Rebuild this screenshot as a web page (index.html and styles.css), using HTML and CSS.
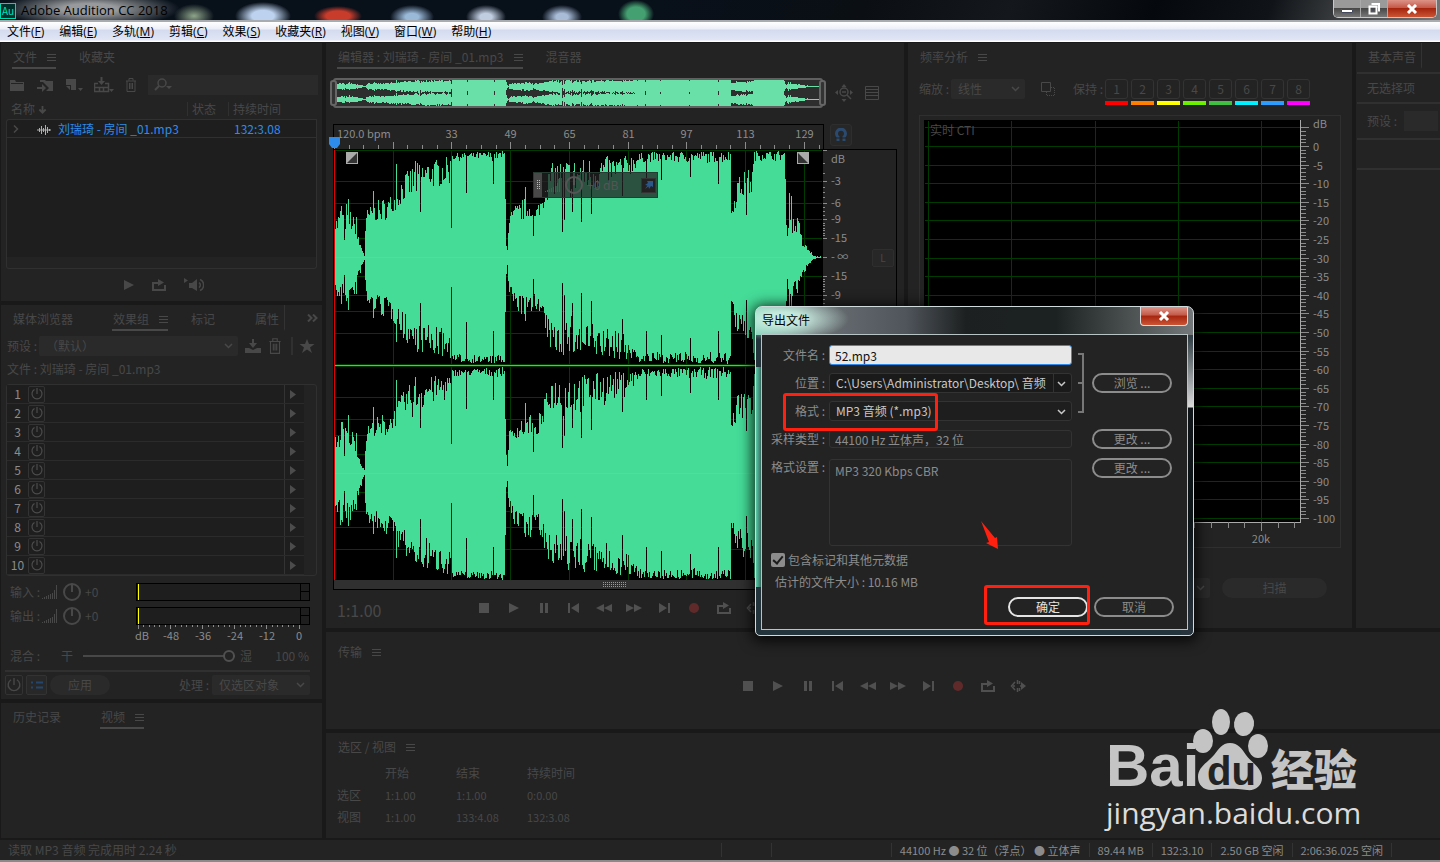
FILE: index.html
```html
<!DOCTYPE html>
<html lang="zh-CN">
<head>
    <meta charset="UTF-8">
    <meta name="viewport" content="width=device-width, initial-scale=1.0">
    <title>Adobe Audition CC 2018</title>
    <link rel="stylesheet" href="styles.css">
</head>
<body>

    <!-- shared icons -->
    <svg class="sprite" width="0" height="0" aria-hidden="true">
        <symbol id="i-menu" viewBox="0 0 9 9"><path d="M0 1.5h9M0 4.5h9M0 7.5h9" stroke="currentColor" fill="none"/></symbol>
        <symbol id="i-folder" viewBox="0 0 16 16"><path d="M1 3h5l1 2h8v9H1z M2 6v1h12V6z" fill="currentColor" fill-rule="evenodd"/></symbol>
        <symbol id="i-import" viewBox="0 0 18 16"><path d="M4 3h5l1 1h7v10h-7l3-3-6-6H4z" fill="currentColor"/><path d="M3 6l4 3M1 10h5V7l4 4-4 4v-3H1z" fill="currentColor"/></symbol>
        <symbol id="i-new" viewBox="0 0 18 16"><path d="M1 2h10v11L6 13V8H1z M1 9h4v4z M13 11h5l-2.500 3z" fill="currentColor"/></symbol>
        <symbol id="i-tray" viewBox="0 0 20 16"><path d="M4 6.500H.5v8h14v-8H11M.5 10.500h14M5.500 10.500v4M9.500 10.500v4" fill="none" stroke="currentColor" stroke-width="1.500"/><path d="M6.500 0h2v4H11L7.500 8 4 4h2.500zM15 12h5l-2.500 3z" fill="currentColor"/></symbol>
        <symbol id="i-trash" viewBox="0 0 12 16"><path d="M1 4h10M2 4v10.500h8V4M4 3.500V1.500h4v2M4.500 6v6M6 6v6M7.500 6v6" fill="none" stroke="currentColor"/></symbol>
        <symbol id="i-search" viewBox="0 0 18 14"><circle cx="8" cy="5" r="4" fill="none" stroke="currentColor" stroke-width="1.500"/><path d="M5 8l-4 4" stroke="currentColor" stroke-width="2"/><path d="M12 8h6l-3 3z" fill="currentColor"/></symbol>
        <symbol id="i-down" viewBox="0 0 10 10"><path d="M5 1v7M1.500 5L5 8.500 8.500 5" stroke="currentColor" stroke-width="2" fill="none"/></symbol>
        <symbol id="i-chev" viewBox="0 0 8 6"><path d="M.5 1L4 4.500 7.500 1" stroke="currentColor" stroke-width="1.500" fill="none"/></symbol>
        <symbol id="i-right" viewBox="0 0 6 8"><path d="M1 .5L4.500 4 1 7.500" stroke="currentColor" stroke-width="1.500" fill="none"/></symbol>
        <symbol id="i-wave" viewBox="0 0 14 12"><path d="M0 6h14M2.500 4v4M4.500 2v8M6.500 4v4M8.500 1v10M10.500 3v6M12.500 5v2" stroke="currentColor"/></symbol>
        <symbol id="i-play" viewBox="0 0 10 10"><path d="M0 0l10 5-10 5z" fill="currentColor"/></symbol>
        <symbol id="i-stop" viewBox="0 0 10 10"><path d="M0 0h10v10H0z" fill="currentColor"/></symbol>
        <symbol id="i-pause" viewBox="0 0 10 10"><path d="M1 0h3v10H1zM6 0h3v10H6z" fill="currentColor"/></symbol>
        <symbol id="i-prev" viewBox="0 0 12 10"><path d="M0 0h2v10H0zM11 0v10L3 5z" fill="currentColor"/></symbol>
        <symbol id="i-next" viewBox="0 0 12 10"><path d="M10 0h2v10h-2zM1 0v10l8-5z" fill="currentColor"/></symbol>
        <symbol id="i-rew" viewBox="0 0 16 10"><path d="M8 1v8L0 5zM16 1v8L8 5z" fill="currentColor"/></symbol>
        <symbol id="i-ff" viewBox="0 0 16 10"><path d="M0 1v8l8-4zM8 1v8l8-4z" fill="currentColor"/></symbol>
        <symbol id="i-rec" viewBox="0 0 10 10"><circle cx="5" cy="5" r="5" fill="currentColor"/></symbol>
        <symbol id="i-loop" viewBox="0 0 14 12"><path d="M4 4H1v7h12V6" fill="none" stroke="currentColor" stroke-width="2"/><path d="M4 3h2V0l6 3.500L6 7V5H4z" fill="currentColor"/></symbol>
        <symbol id="i-skip" viewBox="0 0 16 12"><path d="M3 6h2M5 2L1.500 6 5 10M7.500 0v4M7.500 8v4M9.500 1v3M9.500 8v3M10 6h3" fill="none" stroke="currentColor" stroke-width="1.500"/><path d="M11 2l5 4-5 4z" fill="currentColor"/></symbol>
        <symbol id="i-speaker" viewBox="0 0 20 14"><path d="M0 0l4 2.500L0 5zM5 5h3l5-4v12L8 10H5z" fill="currentColor"/><path d="M15 4.500a3 3 0 010 5M16 1.500a6 6 0 010 11" fill="none" stroke="currentColor" stroke-width="1.500"/></symbol>
        <symbol id="i-save" viewBox="0 0 16 14"><path d="M0 9h4l4 2 4-2h4v5H0zM7 0h2v4h3L8 9 4 4h3z" fill="currentColor"/></symbol>
        <symbol id="i-star" viewBox="0 0 16 16"><path d="M8 1l2 5h5.500l-4.500 3.500 2 5.500-5-3.500L3 15l2-5.500L.5 6H6z" fill="currentColor"/></symbol>
        <symbol id="i-more" viewBox="0 0 11 8"><path d="M1 .5L4.500 4 1 7.500M6 .5L9.500 4 6 7.500" fill="none" stroke="currentColor" stroke-width="2"/></symbol>
        <symbol id="i-power" viewBox="0 0 12 12"><path d="M6 0v6M3.500 1.500a5 5 0 105 0" fill="none" stroke="currentColor" stroke-width="1.200"/></symbol>
        <symbol id="i-list" viewBox="0 0 12 8"><path d="M0 1.500h2M5 1.500h7M0 6.500h2M5 6.500h7" stroke="currentColor" stroke-width="2"/></symbol>
        <symbol id="i-bars" viewBox="0 0 16 14"><path d="M.5 14v-1M2.500 14v-2M4.500 14v-3M6.500 14v-4M8.500 14v-5M10.500 14v-6M12.500 14V5M14.500 14V0" stroke="currentColor"/></symbol>
        <symbol id="i-knob" viewBox="0 0 20 20"><circle cx="10" cy="10" r="8" fill="none" stroke="currentColor" stroke-width="2"/><path d="M10 2v8" stroke="currentColor" stroke-width="2"/></symbol>
        <symbol id="i-zoomall" viewBox="0 0 18 18"><circle cx="9" cy="8" r="4" fill="none" stroke="currentColor" stroke-width="1.500"/><path d="M7 8h4M12 11l4 4" stroke="currentColor" stroke-width="1.500"/><path d="M9 0l2.500 3h-5zM9 18l2.500-3h-5zM0 8.500L3 6v5zM18 8.500L15 6v5z" fill="currentColor"/></symbol>
        <symbol id="i-rows" viewBox="0 0 14 14"><path d="M.5.5h13v13H.5zM0 3.500h14M0 6.500h14M0 9.500h14" fill="none" stroke="currentColor"/></symbol>
        <symbol id="i-magnet" viewBox="0 0 14 14"><path d="M4 13V9a4.500 4.500 0 116 0v4" fill="none" stroke="currentColor" stroke-width="3"/><path d="M1 10h12" stroke="#232323"/></symbol>
        <symbol id="i-copy" viewBox="0 0 14 14"><path d="M.5.5h9v9h-9z" fill="none" stroke="currentColor"/><path d="M10 5.500h3.500v8h-8V10" fill="none" stroke="currentColor" stroke-dasharray="1 1"/></symbol>
        <symbol id="i-pin" viewBox="0 0 10 10"><path d="M3 1h6v6L7 6 5 9 4.500 6.500 1 9 3.500 5.500 1 5l3-2z" fill="currentColor"/></symbol>
    </svg>

    <header class="titlebar">
        <span class="app-icon">Au</span>
        <h1 class="app-title">Adobe Audition CC 2018</h1>
        <div class="win-buttons">
            <button aria-label="最小化"><svg width="12" height="8"><path d="M.5 4.500h11v3H.5z" fill="#fff" stroke="#444a5c"/></svg></button>
            <button aria-label="还原"><svg width="12" height="12"><path d="M3.500 1h7.500v7.500M1.500 3.500h7v7h-7z" fill="none" stroke="#fff" stroke-width="2"/><path d="M4 5.500h2v2H4z" fill="#444a5c"/></svg></button>
            <button class="win-close" aria-label="关闭"><svg width="12" height="10"><path d="M2 1l8 8M10 1L2 9" stroke="#fff" stroke-width="3"/></svg></button>
        </div>
    </header>

    <nav class="menubar">
        <button>文件(<u>F</u>)</button>
        <button>编辑(<u>E</u>)</button>
        <button>多轨(<u>M</u>)</button>
        <button>剪辑(<u>C</u>)</button>
        <button>效果(<u>S</u>)</button>
        <button>收藏夹(<u>R</u>)</button>
        <button>视图(<u>V</u>)</button>
        <button>窗口(<u>W</u>)</button>
        <button>帮助(<u>H</u>)</button>
    </nav>

    <main class="workspace">
        <div class="side">
            <section class="panel files">
                <div class="tabs">
                    <button class="tab active">文件<svg><use href="#i-menu"/></svg></button>
                    <button class="tab">收藏夹</button>
                </div>
                <div class="file-tools">
                    <button aria-label="打开文件"><svg width="16" height="16"><use href="#i-folder"/></svg></button>
                    <button aria-label="导入文件"><svg width="18" height="16"><use href="#i-import"/></svg></button>
                    <button aria-label="新建文件"><svg width="18" height="16"><use href="#i-new"/></svg></button>
                    <button aria-label="插入到多轨"><svg width="20" height="16"><use href="#i-tray"/></svg></button>
                    <button aria-label="删除"><svg width="12" height="16"><use href="#i-trash"/></svg></button>
                    <label class="search"><svg width="18" height="14"><use href="#i-search"/></svg><input type="text" aria-label="搜索"></label>
                </div>
                <table class="file-table">
                    <thead>
                        <tr>
                            <th class="c-name">名称 <svg width="9" height="9"><use href="#i-down"/></svg></th>
                            <th class="c-state">状态</th>
                            <th>持续时间</th>
                        </tr>
                    </thead>
                    <tbody>
                        <tr>
                            <td><svg class="expand" width="6" height="8"><use href="#i-right"/></svg><svg class="wave-ico" width="14" height="12"><use href="#i-wave"/></svg>刘瑞琦 - 房间 _01.mp3</td>
                            <td></td>
                            <td>132:3.08</td>
                        </tr>
                    </tbody>
                </table>
                <div class="file-space"></div>
                <div class="preview">
                    <button aria-label="播放"><svg width="10" height="10"><use href="#i-play"/></svg></button>
                    <button aria-label="循环"><svg width="14" height="12"><use href="#i-loop"/></svg></button>
                    <button aria-label="自动播放"><svg width="20" height="14"><use href="#i-speaker"/></svg></button>
                </div>
            </section>

            <section class="panel rack">
                <div class="tabs">
                    <button class="tab">媒体浏览器</button>
                    <button class="tab active">效果组<svg><use href="#i-menu"/></svg></button>
                    <button class="tab">标记</button>
                    <button class="tab last">属性</button>
                    <button class="more" aria-label="更多"><svg width="11" height="8"><use href="#i-more"/></svg></button>
                </div>
                <div class="preset-row">
                    <label for="preset">预设 :</label>
                    <span class="select"><select id="preset"><option>（默认）</option></select><svg><use href="#i-chev"/></svg></span>
                    <button aria-label="保存预设"><svg width="16" height="14"><use href="#i-save"/></svg></button>
                    <button aria-label="删除预设"><svg width="14" height="18"><use href="#i-trash"/></svg></button>
                    <i></i>
                    <button aria-label="收藏"><svg width="16" height="16"><use href="#i-star"/></svg></button>
                </div>
                <p class="rack-file">文件 : 刘瑞琦 - 房间 _01.mp3</p>
                <ol class="slots" id="slots"></ol>
                <div class="levels">
                    <div class="level"><span>输入 :</span><svg width="16" height="14"><use href="#i-bars"/></svg><svg width="20" height="20"><use href="#i-knob"/></svg><span>+0</span><div class="meter"></div></div>
                    <div class="level"><span>输出 :</span><svg width="16" height="14"><use href="#i-bars"/></svg><svg width="20" height="20"><use href="#i-knob"/></svg><span>+0</span><div class="meter"></div></div>
                </div>
                <svg class="meter-scale" id="meterScale"></svg>
                <div class="mix">
                    <label for="mix">混合 :</label><span>干</span>
                    <input type="range" id="mix" value="100">
                    <span>湿</span><output for="mix">100 %</output>
                </div>
                <div class="rack-foot">
                    <button class="sq" aria-label="电源"><svg width="14" height="14"><use href="#i-power"/></svg></button>
                    <button class="sq wide" aria-label="列表"><svg width="12" height="8"><use href="#i-list"/></svg></button>
                    <button class="pill">应用</button>
                    <label for="proc">处理 :</label>
                    <span class="select"><select id="proc"><option>仅选区对象</option></select><svg><use href="#i-chev"/></svg></span>
                </div>
            </section>

            <section class="panel history">
                <div class="tabs">
                    <button class="tab">历史记录</button>
                    <button class="tab active">视频<svg><use href="#i-menu"/></svg></button>
                </div>
            </section>
        </div>

        <div class="center">
            <div class="top-row">
                <section class="panel editor">
                    <div class="tabs">
                        <button class="tab active">编辑器 : 刘瑞琦 - 房间 _01.mp3<svg><use href="#i-menu"/></svg></button>
                        <button class="tab">混音器</button>
                    </div>
                    <div class="overview-row">
                        <div class="overview"><svg id="overview"></svg></div>
                        <button aria-label="缩放"><svg width="18" height="18"><use href="#i-zoomall"/></svg></button>
                        <button aria-label="显示"><svg width="14" height="14"><use href="#i-rows"/></svg></button>
                    </div>
                    <div class="ruler-row">
                        <div class="ruler"><svg id="ruler"></svg></div>
                        <button class="snap" aria-label="对齐"><svg width="14" height="14"><use href="#i-magnet"/></svg></button>
                    </div>
                    <div class="wave-box">
                        <div class="wave-main">
                            <svg id="wave"></svg>
                            <div class="scroll-strip"><i></i></div>
                            <div class="hud">
                                <i></i><svg width="16" height="14"><use href="#i-bars"/></svg><svg width="20" height="20"><use href="#i-knob"/></svg><span>+0 dB</span>
                                <button aria-label="固定"><svg width="10" height="10"><use href="#i-pin"/></svg></button>
                            </div>
                        </div>
                        <div class="db-scale"><svg id="dbScale"></svg><button class="chan">L</button></div>
                    </div>
                    <div class="time-row">
                        <span class="time">1:1.00</span>
                        <div class="transport" data-transport></div>
                    </div>
                </section>

                <section class="panel freq">
                    <div class="tabs"><button class="tab">频率分析<svg><use href="#i-menu"/></svg></button></div>
                    <div class="freq-tools">
                        <label for="zoom">缩放 :</label>
                        <span class="select"><select id="zoom"><option>线性</option></select><svg><use href="#i-chev"/></svg></span>
                        <button aria-label="复制"><svg width="14" height="14"><use href="#i-copy"/></svg></button>
                        <span>保持 :</span>
                        <div class="holds" id="holds"></div>
                    </div>
                    <div class="freq-frame"><svg id="freq"></svg></div>
                    <div class="freq-foot">
                        <span class="select"><select aria-label="FFT"><option></option></select><svg><use href="#i-chev"/></svg></span>
                        <button class="pill">扫描</button>
                    </div>
                </section>

                <section class="panel essential">
                    <div class="tabs"><button class="tab last">基本声音</button></div>
                    <p class="ess-line">无选择项</p>
                    <p class="ess-line preset"><span>预设 :</span><b></b></p>
                    <p class="ess-line short"></p>
                </section>
            </div>

            <section class="panel transport-panel">
                <div class="tabs"><button class="tab">传输<svg><use href="#i-menu"/></svg></button></div>
                <div class="transport" data-transport></div>
            </section>

            <section class="panel selection">
                <div class="tabs"><button class="tab">选区 / 视图<svg><use href="#i-menu"/></svg></button></div>
                <table>
                    <tr><th></th><th>开始</th><th>结束</th><th>持续时间</th></tr>
                    <tr><th>选区</th><td>1:1.00</td><td>1:1.00</td><td>0:0.00</td></tr>
                    <tr><th>视图</th><td>1:1.00</td><td>133:4.08</td><td>132:3.08</td></tr>
                </table>
            </section>
        </div>
    </main>

    <footer class="statusbar">
        <span class="msg">读取 MP3 音频 完成用时 2.24 秒</span>
        <span class="blank"></span>
        <span class="blank wide"></span>
        <span>44100 Hz ● 32 位（浮点） ● 立体声</span>
        <span>89.44 MB</span>
        <span>132:3.10</span>
        <span>2.50 GB 空闲</span>
        <span>2:06:36.025 空闲</span>
        <span class="end"></span>
    </footer>

    <div class="dialog" role="dialog" aria-labelledby="dlgTitle">
        <div class="dlg-head">
            <h2 id="dlgTitle">导出文件</h2>
            <button class="win-close" aria-label="关闭"><svg width="12" height="10"><path d="M2 1l8 8M10 1L2 9" stroke="#fff" stroke-width="3"/></svg></button>
        </div>
        <form class="dlg-body" onsubmit="return false">
            <div class="fields">
                <label for="fname">文件名 :</label>
                <input type="text" id="fname" value="52.mp3">
                <label for="loc">位置 :</label>
                <span class="select split"><select id="loc"><option>C:\Users\Administrator\Desktop\ 音频</option></select><svg><use href="#i-chev"/></svg></span>
                <button class="pill browse">浏览 ...</button>
                <label for="fmt">格式 :</label>
                <span class="select"><select id="fmt"><option>MP3 音频 (*.mp3)</option></select><svg><use href="#i-chev"/></svg></span>
                <label for="stype">采样类型 :</label>
                <input type="text" id="stype" class="flat" value="44100 Hz 立体声，32 位" readonly>
                <button class="pill change">更改 ...</button>
                <label for="fset">格式设置 :</label>
                <textarea id="fset" class="flat" readonly>MP3 320 Kbps CBR</textarea>
                <button class="pill change-set">更改 ...</button>
                <span class="bracket"></span>
            </div>
            <label class="check"><input type="checkbox" checked>包含标记和其他元数据</label>
            <p class="size">估计的文件大小 : 10.16 MB</p>
            <div class="actions">
                <button class="pill ok">确定</button>
                <button class="pill">取消</button>
            </div>
        </form>
        <span class="mark mark-format"></span>
        <span class="mark mark-ok"></span>
        <svg class="arrow" width="18" height="30"><path d="M0 0L14 17l2-1 1 12-12-6 3-1z" fill="#ff2010"/></svg>
    </div>

    <div class="watermark">
        <div class="logo">
            <span>Bai</span>
            <div class="paw">
                <svg width="76" height="84" viewBox="0 0 76 84" fill="#c4c4c4">
                    <ellipse cx="10" cy="33" rx="10" ry="12"/>
                    <ellipse cx="28" cy="14" rx="9" ry="13"/>
                    <ellipse cx="51" cy="16" rx="10" ry="12" transform="rotate(8 51 16)"/>
                    <ellipse cx="65" cy="38" rx="10" ry="12"/>
                    <path d="M37 35c8 0 12 6 16 12 6 8 16 13 16 23 0 8-7 13-15 12-10-1-22-2-34 0-9 1-15-5-15-13 0-10 9-14 16-22 5-6 8-12 16-12z"/>
                </svg>
                <b>du</b>
            </div>
            <span class="cn">经验</span>
        </div>
        <p>jingyan.baidu.com</p>
    </div>

    <script src="script.js"></script>
</body>
</html>
```

FILE: styles.css
```css
*, *::before, *::after {
    box-sizing: border-box;
}
body {
    margin: 0;
    min-height: 100vh;
    display: flex;
    flex-direction: column;
    position: relative;
    background: #191919;
    color: #484848;
    font: 12px/16px "Noto Sans CJK SC", sans-serif;
    overflow: hidden;
}
button, input, select, textarea {
    font: inherit;
    color: inherit;
    background: none;
    border: 0;
    margin: 0;
    padding: 0;
    outline: 0;
}
h1, h2, p, ol, table {
    margin: 0;
    padding: 0;
    font-size: 12px;
    font-weight: 400;
}
th {
    font-weight: 400;
    text-align: left;
}
svg {
    display: block;
    flex: none;
}
svg text {
    font-size: 11px;
    fill: #8c8c8c;
}
.sprite {
    position: absolute;
}

/* window frame */
.titlebar {
    height: 22px;
    display: flex;
    align-items: flex-start;
    border-bottom: 2px solid #a8acb0;
    background:
        radial-gradient(ellipse 90px 18px at 90px 9px, rgba(200, 200, 200, .75) 30%, transparent),
        radial-gradient(ellipse 20px 12px at 194px 16px, #8fa58a, transparent),
        radial-gradient(ellipse 28px 14px at 263px 16px, #bcd2ee 40%, transparent),
        radial-gradient(ellipse 24px 10px at 338px 16px, #c83c2c 50%, transparent),
        radial-gradient(ellipse 22px 12px at 412px 17px, #9ab8d8 30%, transparent),
        radial-gradient(ellipse 20px 12px at 486px 17px, #c0cce0 30%, transparent),
        radial-gradient(ellipse 20px 12px at 562px 17px, #a8bcd8 30%, transparent),
        radial-gradient(ellipse 18px 14px at 636px 14px, #44a070 50%, transparent),
        linear-gradient(110deg, #08101a 45%, #0b0f14 60%, #14181c 70%, #05080c 80%, #101418 88%, #777 100%);
}
.app-icon {
    width: 16px;
    height: 16px;
    margin: 3px 5px 0 0;
    background: #00302c;
    border: 1px solid #00d8b0;
    color: #00e4bb;
    font-size: 10px;
    line-height: 13px;
    text-align: center;
}
.app-title {
    flex: 1;
    color: #000;
    font: 13px/20px "Open Sans", sans-serif;
}
.win-buttons {
    display: flex;
    margin-right: 3px;
    border: 1px solid #c8c8c8;
    border-top: 0;
    border-radius: 0 0 5px 5px;
    overflow: hidden;
}
.win-buttons button {
    width: 27px;
    height: 17px;
    display: grid;
    place-items: center;
    border-right: 1px solid #aaa;
    background: linear-gradient(#9a9a9a 45%, #484848 50%, #777);
}
.win-buttons .win-close, .win-close {
    width: 48px;
    display: grid;
    place-items: center;
    border: 0;
    background: linear-gradient(#dd9386, #c45a4a 45%, #a5250e 50%, #cc5434);
}
.menubar {
    height: 20px;
    display: flex;
    gap: 15px;
    padding: 0 7px;
    background: linear-gradient(#fff, #eceff8 35%, #d4dbef 40%, #e1e6f5 90%, #fff 96%);
    color: #000;
    font-family: "Open Sans", "Noto Sans CJK SC", sans-serif;
}

/* panels */
.workspace {
    flex: 1;
    display: flex;
    gap: 4px;
    padding: 1px 0 2px 1px;
}
.side {
    width: 321px;
    display: flex;
    flex-direction: column;
    gap: 4px;
}
.center {
    flex: 1;
    min-width: 0;
    display: flex;
    flex-direction: column;
    gap: 4px;
}
.top-row {
    flex: 1;
    display: flex;
    gap: 4px;
}
.panel {
    background: #232323;
    display: flex;
    flex-direction: column;
}
.tabs {
    height: 26px;
    flex: none;
    display: flex;
    gap: 22px;
    padding-left: 11px;
}
.tab {
    display: flex;
    align-items: center;
    gap: 10px;
    height: 26px;
    padding: 4px 17px 0 1px;
    border-bottom: 2px solid transparent;
    white-space: nowrap;
}
.tab svg {
    width: 9px;
    height: 9px;
    margin-right: -17px;
}
.tab.active {
    padding-right: 0;
    border-color: #484848;
}
.tab.active svg {
    margin-right: 0;
}
.tab.last {
    padding-right: 5px;
    border-right: 1px solid #333;
}
.more {
    margin: 0 4px 0 auto;
}
.select {
    position: relative;
    display: block;
    height: 20px;
    background: #2a2a2a;
    border-radius: 2px;
}
.select select {
    appearance: none;
    width: 100%;
    height: 100%;
    padding: 0 7px;
}
.select svg {
    position: absolute;
    right: 5px;
    top: 7px;
    width: 9px;
    height: 6px;
    pointer-events: none;
}
.pill {
    height: 20px;
    border-radius: 10px;
    background: #2a2a2a;
    text-align: center;
}

/* files */
.files {
    height: 258px;
}
.file-tools {
    display: flex;
    align-items: center;
    gap: 11px;
    height: 20px;
    margin: 6px 4px 4px 8px;
}
.search {
    flex: 1;
    height: 20px;
    display: flex;
    align-items: center;
    padding-left: 6px;
    background: #2a2a2a;
}
.search input {
    width: 100%;
}
.file-table {
    margin: 0 5px;
    border-spacing: 0;
    table-layout: fixed;
}
.file-table th {
    height: 20px;
    padding: 0 0 0 5px;
}
.file-table th svg {
    display: inline-block;
}
.file-table .c-name {
    width: 181px;
}
.file-table .c-state {
    width: 41px;
}
.file-table th + th {
    background: linear-gradient(#303030, #303030) no-repeat 0 3px / 1px 14px;
}
.file-table td {
    height: 19px;
    padding: 0 0 0 6px;
    background: #1e1e1e;
    border: solid #303030;
    border-width: 1px 0;
    color: #2d8ceb;
    line-height: 17px;
    white-space: nowrap;
}
.file-table td:first-child {
    border-left-width: 1px;
    border-top-left-radius: 3px;
}
.file-table td:last-child {
    border-right-width: 1px;
}
.file-table td svg {
    display: inline-block;
    vertical-align: -2px;
    color: #b0b0b0;
}
.file-table .expand {
    margin-right: 18px;
    vertical-align: 1px;
    color: #484848;
}
.file-table .wave-ico {
    margin-right: 7px;
}
.file-space {
    flex: 1;
    margin: 0 5px;
    border: 1px solid #303030;
    border-top: 0;
    border-radius: 0 0 3px 3px;
    background: linear-gradient(#232323, #232323) no-repeat bottom / 100% 11px #1e1e1e;
}
.preview {
    height: 32px;
    display: flex;
    align-items: center;
    justify-content: center;
    gap: 18px;
    padding-left: 4px;
}

/* effects rack */
.rack {
    height: 394px;
}
.preset-row {
    display: flex;
    align-items: center;
    height: 20px;
    margin: 5px 5px 0 6px;
}
.preset-row label {
    width: 32px;
}
.preset-row .select {
    width: 199px;
    margin-right: 7px;
}
.preset-row button + button {
    margin-left: 7px;
}
.preset-row i {
    width: 2px;
    height: 18px;
    margin: 0 6px 0 9px;
    background: #303030;
}
.rack-file {
    margin: 5px 6px 6px;
}
.slots {
    margin: 1px 5px 0;
    list-style: none;
    border: 1px solid #303030;
    border-radius: 3px;
    padding-right: 12px;
}
.slots li {
    display: flex;
    align-items: center;
    height: 19px;
    background: #1e1e1e;
    border-bottom: 1px solid #2b2b2b;
    color: #8c8c8c;
}
.slots span {
    width: 21px;
    text-align: center;
}
.slots button {
    width: 17px;
    height: 17px;
    display: grid;
    place-items: center;
    border: 1px solid #333;
    border-radius: 2px;
    color: #4c4c4c;
}
.slots .go {
    width: 20px;
    height: 18px;
    margin-left: auto;
    padding-right: 3px;
    border-width: 0 0 0 1px;
    border-radius: 0;
}
.levels {
    padding: 4px 12px 0 9px;
}
.level {
    display: flex;
    align-items: center;
    height: 24px;
}
.level span {
    width: 32px;
}
.level svg + svg {
    margin: 0 3px 0 4px;
}
.level .meter {
    width: 174px;
    height: 18px;
    margin-left: auto;
    border: 1px solid #000;
    background:
        linear-gradient(#ff0, #ff0) no-repeat 1px 0 / 1px 100%,
        linear-gradient(#000, #000) no-repeat right 7px / 8px 1px,
        linear-gradient(#000, #000) no-repeat right 8px top / 1px 100%,
        #1e1e1e;
}
.meter-scale {
    width: 100%;
    height: 18px;
    margin-top: -3px;
}
.mix {
    display: flex;
    align-items: center;
    height: 22px;
    margin: 2px 5px 0;
    padding: 0 8px 0 4px;
}
.mix label {
    width: 51px;
}
.mix input {
    appearance: none;
    flex: 1;
    height: 12px;
    margin: 0 5px 0 10px;
    background: linear-gradient(#484848, #484848) no-repeat 0 5px / 100% 2px;
}
.mix input::-webkit-slider-thumb {
    appearance: none;
    width: 12px;
    height: 12px;
    border: 2px solid #505050;
    border-radius: 50%;
    background: #232323;
}
.mix output {
    width: 57px;
    text-align: right;
}
.rack-foot {
    display: flex;
    align-items: center;
    gap: 3px;
    height: 27px;
    margin: 3px 12px 0 4px;
    background: linear-gradient(#303030, #303030) no-repeat 0 0 / 100% 2px;
    padding-top: 3px;
}
.sq {
    width: 18px;
    height: 20px;
    display: grid;
    place-items: center;
    border: 1px solid #333;
    border-radius: 2px;
}
.sq.wide {
    width: 21px;
    color: #24466c;
    background: #282828;
}
.rack-foot .pill {
    width: 60px;
    margin-right: auto;
}
.rack-foot .select {
    width: 98px;
}
.history {
    flex: 1;
}

/* editor */
.editor {
    flex: 1;
    min-width: 0;
}
.overview-row {
    display: flex;
    align-items: center;
    gap: 12px;
    margin: 9px 25px 0 7px;
}
.overview {
    flex: 1;
    height: 30px;
    border: 2px solid #606060;
    border-radius: 3px;
    background: #2e2e2e;
    position: relative;
}
.overview svg {
    width: 100%;
    height: 26px;
}
.overview::before, .overview::after {
    content: "";
    position: absolute;
    top: 0;
    width: 7px;
    height: 26px;
    left: -5px;
    border: 2px solid #666;
    border-radius: 3px;
    background: #333;
}
.overview::after {
    left: auto;
    right: -5px;
}
.ruler-row {
    display: flex;
    margin: 16px 52px 0 7px;
}
.ruler {
    flex: 1;
    height: 25px;
    border: solid #000;
    border-width: 1px 1px 0;
}
.ruler svg {
    width: 100%;
    height: 24px;
    overflow: visible;
    position: relative;
    z-index: 1;
}
.snap {
    width: 22px;
    height: 22px;
    margin-left: 6px;
    display: grid;
    place-items: center;
    border: 1px solid #2e2e2e;
    border-radius: 3px;
    background: #272727;
    color: #2b4a70;
}
.wave-box {
    flex: 1;
    display: flex;
    margin: 0 7px;
    border: 1px solid #000;
}
.wave-main {
    flex: 1;
    min-width: 0;
    position: relative;
    display: flex;
    flex-direction: column;
}
.wave-main > svg {
    flex: 1;
    width: 100%;
    background: #000;
}
.scroll-strip {
    height: 9px;
    padding: 2px 40% 2px 55%;
    background: #303030;
}
.scroll-strip i {
    display: block;
    height: 5px;
    background: conic-gradient(#999 25%, transparent 0) 0 0 / 2px 2px;
}
.hud {
    position: absolute;
    left: 199px;
    top: 22px;
    width: 125px;
    height: 26px;
    display: flex;
    align-items: center;
    gap: 3px;
    background: rgba(35, 35, 35, .75);
    border: 1px solid #263c32;
    color: #555;
}
.hud i {
    width: 8px;
    flex: none;
    height: 100%;
    padding: 7px 2px;
    background: conic-gradient(#bbb 25%, transparent 0) 0 0 / 2px 2px content-box, #484848;
}
.hud span {
    flex: 1;
    white-space: nowrap;
}
.hud button {
    width: 15px;
    height: 15px;
    display: grid;
    place-items: center;
    background: #222;
    border: 1px solid #333;
    margin-right: 1px;
    color: #2d5788;
}
.db-scale {
    width: 74px;
    position: relative;
    border-left: 1px solid #000;
}
.db-scale > svg {
    width: 100%;
    height: 100%;
}
.chan {
    position: absolute;
    right: 2px;
    top: 99px;
    width: 22px;
    height: 18px;
    border: 1px solid #2e2e2e;
    border-radius: 2px;
    background: #272727;
    font-size: 10px;
}
.time-row {
    position: relative;
    display: flex;
    height: 38px;
    padding-left: 11px;
}
.time {
    width: 132px;
    font-size: 16px;
    line-height: 40px;
}
.transport {
    display: flex;
    align-items: center;
    height: 36px;
}
.transport button {
    width: 30px;
    height: 20px;
    flex: none;
    display: grid;
    place-items: center;
    color: #505050;
}
.transport .rec {
    color: #612a2a;
}

/* frequency analysis */
.freq {
    width: 444px;
}
.freq-tools {
    display: flex;
    align-items: center;
    height: 26px;
    margin: 10px 0 0 11px;
    line-height: 20px;
}
.freq-tools label {
    width: 32px;
    align-self: flex-start;
}
.freq-tools .select {
    width: 74px;
    margin-right: 16px;
    align-self: flex-start;
}
.freq-tools > button {
    width: 32px;
    height: 20px;
    align-self: flex-start;
    display: flex;
    align-items: center;
}
.freq-tools > span:not(.select) {
    width: 32px;
    align-self: flex-start;
}
.holds {
    display: flex;
    gap: 3px;
}
.holds button {
    width: 23px;
    height: 26px;
    line-height: 18px;
    border-bottom: 4px solid;
}
.holds span {
    display: block;
    height: 20px;
    margin-bottom: 2px;
    border: 1px solid #333;
    border-radius: 3px;
    color: #484848;
}
.freq-frame {
    flex: 1;
    margin: 10px 11px 0;
    border: 1px solid #2f2f2f;
}
.freq-frame svg {
    width: 100%;
    height: 100%;
}
.freq-foot {
    display: flex;
    justify-content: flex-end;
    gap: 12px;
    height: 50px;
    margin: 30px 25px 0;
}
.freq-foot .select {
    width: 160px;
}
.freq-foot .pill {
    width: 105px;
}

/* essential sound */
.essential {
    width: 84px;
}
.ess-line {
    display: flex;
    align-items: center;
    height: 30px;
    margin-left: 1px;
    padding-left: 10px;
    border-top: 2px solid #303030;
}
.tabs + .ess-line {
    margin-top: 3px;
}
.ess-line.preset {
    height: 36px;
}
.ess-line.preset b {
    flex: 1;
    height: 20px;
    margin: 0 2px 0 7px;
    background: #2a2a2a;
}
.ess-line.short {
    height: 32px;
    border-bottom: 2px solid #303030;
}

/* lower panels */
.transport-panel {
    height: 97px;
    padding-top: 6px;
}
.transport-panel .transport {
    margin-left: 407px;
    height: 44px;
}
.selection {
    height: 105px;
}
.selection table {
    width: 261px;
    margin: 3px 0 0 11px;
    border-spacing: 0;
    table-layout: fixed;
}
.selection th, .selection td {
    height: 22px;
    padding: 0;
}
.selection td {
    font-size: 11px;
}
.selection th:first-child {
    width: 48px;
}
.statusbar {
    height: 22px;
    display: flex;
    align-items: center;
    padding-right: 48px;
    background: #232323;
    border-bottom: 2px solid #8a8a8a;
    color: #8c8c8c;
    font-size: 11px;
}
.statusbar span {
    height: 14px;
    line-height: 14px;
    padding: 0 8px;
    border-left: 1px solid #333;
    white-space: nowrap;
}
.statusbar .msg {
    flex: 1;
    border: 0;
    color: #484848;
    font-size: 12px;
}
.statusbar .blank {
    width: 50px;
}
.statusbar .wide {
    width: 120px;
}
.statusbar .end {
    padding: 0;
}

/* export dialog */
.dialog {
    position: absolute;
    left: 755px;
    top: 306px;
    width: 439px;
    height: 330px;
    padding: 0 5px 5px;
    display: flex;
    flex-direction: column;
    border: 1px solid #d0dcdc;
    border-radius: 7px 7px 5px 5px;
    box-shadow: 0 2px 14px 3px rgba(0, 0, 0, .8);
    background:
        radial-gradient(ellipse 65px 22px at 28px 12px, rgba(205, 240, 228, .9) 30%, transparent),
        linear-gradient(90deg, #58c8a4 0, rgba(88, 200, 164, 0) 8px) no-repeat 0 60px / 12px 220px,
        linear-gradient(rgba(110, 114, 116, .2) 30px, #dadada 100px, #101518 101px, #0c1418 65%, #28343e) no-repeat right 0 top 0 / 12px 100%,
        linear-gradient(90deg, #7ad0b4 0, #6a7074 60px, #50555c 150px, #1c2020 210px, #1c2222 300px, #74787a 100%) no-repeat 0 0 / 100% 28px,
        #24343c;
}
.dlg-head {
    height: 27px;
    display: flex;
    justify-content: space-between;
}
.dlg-head h2 {
    color: #000;
    line-height: 26px;
    padding-left: 1px;
}
.dlg-head .win-close {
    height: 19px;
    border: 1px solid #ddd;
    border-top: 0;
    border-radius: 0 0 4px 4px;
}
.dlg-body {
    flex: 1;
    padding-top: 6px;
    border: 1px solid #b8c4c4;
    background: #232323;
    color: #8c8c8c;
}
.fields {
    display: grid;
    grid-template-columns: 63px 243px 96px;
    grid-template-rows: 28px 28px 28px 28px 98px;
    column-gap: 4px;
    align-items: center;
}
.fields label {
    grid-column: 1;
    text-align: right;
    white-space: nowrap;
}
.fields input, .fields textarea, .fields .select {
    grid-column: 2;
    width: 243px;
    height: 20px;
    padding: 0 5px;
    border: 1px solid #333;
    border-radius: 3px;
    background: #1e1e1e;
}
.fields .select {
    padding: 0;
    color: #c8c8c8;
}
.fields .select select {
    padding: 0 6px;
}
.fields .split {
    background: linear-gradient(#333, #333) no-repeat right 17px top / 1px 100%, #1a1a1a;
}
.fields input.flat, .fields textarea.flat {
    height: 18px;
    background: #232323;
}
.fields textarea.flat {
    display: block;
    align-self: start;
    resize: none;
    height: 87px;
    margin-top: 6px;
    padding: 3px 5px;
}
.fields label[for="fset"] {
    align-self: start;
    padding-top: 6px;
}
.fields #fname {
    border-color: #2d8ceb;
    background: #e8e8e8;
    color: #111;
}
.dialog .pill {
    width: 80px;
    border: 2px solid #8c8c8c;
    background: none;
    line-height: 14px;
}
.fields .pill {
    grid-column: 3;
    margin-left: 16px;
}
.fields .browse {
    grid-row: 2;
}
.fields .change {
    grid-row: 4;
}
.fields .change-set {
    grid-row: 5;
    align-self: start;
    margin-top: 5px;
}
.bracket {
    grid-column: 3;
    grid-row: 1 / 4;
    width: 6px;
    height: 60px;
    margin-left: 2px;
    border: 2px solid #777;
    border-left: 0;
    background: linear-gradient(#777, #777) no-repeat 0 center / 100% 2px;
}
.check {
    display: flex;
    align-items: center;
    gap: 3px;
    margin: 1px 0 0 9px;
}
.check input {
    appearance: none;
    width: 14px;
    height: 14px;
    border-radius: 2px;
    background: #8c8c8c;
}
.check input:checked::after {
    content: "";
    display: block;
    width: 6px;
    height: 10px;
    margin: 1px 4px;
    border: solid #1c1c1c;
    border-width: 0 2px 2px 0;
    transform: rotate(40deg);
}
.size {
    margin: 6px 0 0 13px;
}
.actions {
    display: flex;
    justify-content: flex-end;
    gap: 6px;
    margin: 7px 13px 0 0;
}
.dialog .ok {
    border-color: #e4e4e4;
    color: #e4e4e4;
}
.mark {
    position: absolute;
    border: 3px solid #ff2010;
    border-radius: 3px;
    pointer-events: none;
}
.mark-format {
    left: 27px;
    top: 86px;
    width: 155px;
    height: 38px;
}
.mark-ok {
    left: 228px;
    top: 278px;
    width: 106px;
    height: 40px;
}
.arrow {
    position: absolute;
    left: 225px;
    top: 214px;
}

/* watermark */
.watermark {
    position: absolute;
    right: 76px;
    bottom: 28px;
    width: 258px;
    color: #c4c4c4;
    pointer-events: none;
}
.logo {
    display: flex;
    align-items: flex-end;
    height: 84px;
    font: bold 60px/52px "Liberation Sans", sans-serif;
}
.logo span {
    width: 87px;
}
.paw {
    position: relative;
    width: 78px;
}
.paw b {
    position: absolute;
    left: 14px;
    bottom: 1px;
    color: #232323;
    font-size: 40px;
    line-height: 40px;
}
.logo .cn {
    font: 900 43px/50px "Noto Sans CJK SC", sans-serif;
}
.watermark p {
    font: 30px/42px "Open Sans", sans-serif;
    color: #dcdcdc;
}
```

FILE: script.js
```javascript
// effect slots
document.getElementById("slots").innerHTML = Array.from({length: 10}, (_, i) => `
    <li><span>${i + 1}</span>
    <button aria-label="电源"><svg width="12" height="12"><use href="#i-power"/></svg></button>
    <button class="go" aria-label="菜单"><svg width="6" height="9" viewBox="0 0 10 10" preserveAspectRatio="none"><path d="M0 0l10 5-10 5z" fill="currentColor"/></svg></button></li>`).join("");

// hold buttons
const holdColors = ["#f00", "#ff8000", "#ff0", "#6cf000", "#40c040", "#00f0ff", "#2d9cff", "#f0f"];
document.getElementById("holds").innerHTML = holdColors.map((c, i) =>
    `<button style="border-color:${c}"><span>${i + 1}</span></button>`).join("");

// transport buttons
const transport = [["stop", 10, 10], ["play", 10, 10], ["pause", 10, 10], ["prev", 12, 10], ["rew", 16, 10],
    ["ff", 16, 10], ["next", 12, 10], ["rec", 10, 10], ["loop", 14, 12], ["skip", 16, 12]];
document.querySelectorAll("[data-transport]").forEach(el => {
    el.innerHTML = transport.map(([n, w, h]) =>
        `<button class="${n}" aria-label="${n}"><svg width="${w}" height="${h}"><use href="#i-${n}"/></svg></button>`).join("");
});

const line = (x1, y1, x2, y2, c) =>
    `<path d="M${x1} ${y1}L${x2} ${y2}" stroke="${c}" shape-rendering="crispEdges"/>`;
const label = (x, y, t, anchor) => `<text x="${x}" y="${y}" text-anchor="${anchor || "start"}">${t}</text>`;

let seed = 7;
function rnd() {
    seed = (seed * 16807) % 2147483647;
    return seed / 2147483647;
}

// [position, low level, high level]
const envelope = [[0, .24, .34], [6, .24, .5], [14, .26, .54], [20, .24, .36], [24, .12, .2], [30, .01, .03],
    [31, .2, .3], [33, .35, .46], [50, .34, .58], [58, .42, .6], [70, .5, .78], [80, .5, .88], [95, .62, .9],
    [116, .66, .94], [118, .9, .97], [171, .9, .99], [172, .5, .6], [173, .1, .2], [175, .2, .4], [180, .32, .48],
    [198, .38, .62], [200, .3, .4], [208, .42, .62], [218, .6, .88], [228, .5, .92], [250, .55, .93], [290, .7, .95],
    [310, .88, .98], [398, .88, .99], [399, .38, .5], [405, .5, .75], [420, .55, .85], [422, .9, .99], [452, .9, .99],
    [454, .3, .5], [460, .22, .4], [467, .2, .34], [470, .1, .16], [476, .05, .09], [482, 0, .01], [489, 0, .005]];
const dips = {86: .42, 117: .27, 133: .6, 160: .68, 174: .07, 200: .2, 229: .23, 231: .35, 239: .42, 248: .33,
    258: .4, 289: .57, 313: .68, 328: .72, 357: .75, 386: .68, 414: .39, 455: .2, 10: .16};
const peaks = {7: .48, 14: .54, 22: .37, 39: .62, 62: .87, 81: .9, 192: .65, 457: .6, 459: .57, 465: .36};

function level(x) {
    let i = 1;
    while (i < envelope.length - 1 && envelope[i][0] < x) i++;
    const a = envelope[i - 1], b = envelope[i];
    const t = Math.min(1, (x - a[0]) / (b[0] - a[0]));
    const lo = a[1] + (b[1] - a[1]) * t, hi = a[2] + (b[2] - a[2]) * t;
    return lo + (hi - lo) * Math.pow(rnd(), hi < .7 ? 1.6 : .8);
}

function channel(w, cy, half) {
    let d = "";
    for (let x = 0; x < w; x++) {
        const p = Math.round(x * 489 / w);
        let up = level(p), down = level(p);
        if (dips[p]) up = down = dips[p];
        if (peaks[p]) { up = peaks[p]; down = up * .9; }
        d += `M${x + .5} ${Math.round(cy - up * half)}V${Math.round(cy + down * half) + 1}`;
    }
    return d;
}

function size(id) {
    const r = document.getElementById(id).getBoundingClientRect();
    return [Math.round(r.width), Math.round(r.height)];
}

function draw() {
    seed = 7;
    const [w, h] = size("wave");
    const step = w * 58.85 / 489;
    const levels = [19, 38, 54, 76, 107];
    const half = (h - 2) / 4;
    const centers = [Math.floor(half), Math.floor(h - half)];
    let s = "";
    for (let x = step; x < w; x += step) s += line(Math.round(x) + .5, 0, Math.round(x) + .5, h, "#003c00");
    centers.forEach(c => {
        [0, ...levels, ...levels.map(v => -v)].forEach(v => {
            const y = Math.round(c + v * half / 107) + .5;
            s += line(0, y, w, y, "#003c00");
        });
    });
    centers.forEach(c => s += `<path d="${channel(w - 1, c, half)}" stroke="#45dc98" shape-rendering="crispEdges"/>`);
    centers.forEach(c => s += line(0, c + .5, w - 8, c + .5, "#50de9c"));
    s += line(0, h / 2 + .5, w, h / 2 + .5, "#7fa878") + line(.5, 0, .5, h, "#e00000");
    // fade handles
    s += `<path d="M12 2h12v12H12z" fill="#aaa"/><path d="M23 3v10H13z" fill="#333"/>`;
    s += `<path d="M${w - 25} 2h12v12h-12z" fill="#aaa"/><path d="M${w - 24} 3v10h10z" fill="#333"/>`;
    document.getElementById("wave").innerHTML = s;

    // overview
    const [ow] = size("overview");
    s = "";
    [6, 19].forEach(c => s += `<path d="${channel(ow - 1, c, 6.5)}" stroke="#68e0a8" shape-rendering="crispEdges"/>`);
    document.getElementById("overview").innerHTML = s;

    // time ruler
    s = label(3, 13, "120.0 bpm");
    for (let i = 0; i * step / 4 < w; i++) {
        const x = Math.round(i * step / 4) + .5;
        s += line(x, i % 4 ? 20 : 17, x, 24, "#8c8c8c");
        if (i % 4 == 0 && i > 4) s += label(x, 13, 1 + i * 4, "middle");
    }
    s += `<path d="M-5 12h11v7l-3 4H-2l-3-4z" fill="#2d8ceb"/>`;
    document.getElementById("ruler").innerHTML = s;

    // dB scale
    s = label(8, 13, "dB") + line(0, .5, 4, .5, "#8c8c8c");
    const names = {76: "-3", 54: "-6", 38: "-9", 19: "-15"};
    centers.forEach(c => {
        s += label(8, c + 4, "- ∞") + line(0, c + .5, 4, c + .5, "#8c8c8c");
        Object.keys(names).forEach(k => {
            [-1, 1].forEach(sign => {
                const y = Math.round(c + sign * k * half / 107);
                s += label(8, y + 4, names[k]) + line(0, y + .5, 4, y + .5, "#8c8c8c");
            });
        });
        [22, 24, 27, 29, 32, 34, 42, 46, 50, 60, 65, 70, 84, 94].forEach(k => {
            s += line(0, c - k + .5, 2, c - k + .5, "#8c8c8c") + line(0, c + k + .5, 2, c + k + .5, "#8c8c8c");
        });
    });
    document.getElementById("dbScale").innerHTML = s;

    // frequency graph
    const [fw, fh] = size("freq");
    const px = fw - 40, py = fh - 25;
    s = `<path d="M4 4H${px}V${py}H4z" fill="#000"/>`;
    for (let i = 0; i < 5; i++) {
        const x = Math.round(8 + i * 83.25) + .5;
        s += line(x, 5, x, py, "#003c00");
    }
    for (let db = 5; db >= -100; db--) {
        const y = Math.round(30 - db * 3.72) + .5;
        const major = db % 5 == 0;
        if (major) s += line(5, y, px, y, "#003c00");
        s += line(px, y, px + (major ? 9 : 6), y, "#8c8c8c");
        if (major && db <= 0) s += label(px + 13, y + 4, db);
    }
    s += label(px + 13, 12, "dB");
    s += line(px + .5, 4, px + .5, py, "#aaa") + line(5, py + .5, px + 1, py + .5, "#aaa");
    for (let i = 0; 8 + i * 16.65 < px; i++) {
        const x = Math.round(8 + i * 16.65) + .5;
        s += line(x, py, x, py + (i % 5 ? 6 : 9), "#8c8c8c");
    }
    s += label(341, py + 21, "20k", "middle");
    s += `<text x="10" y="19" style="fill:#484848;font-size:12px">实时 CTI</text>`;
    document.getElementById("freq").innerHTML = s;

    // level meter scale
    s = "";
    for (let i = 0; i <= 30; i++) {
        const x = Math.round(137 + i * 5.35) + .5;
        s += line(x, 0, x, i % 6 ? 2 : 4, "#8c8c8c");
    }
    ["dB", "-48", "-36", "-24", "-12", "0"].forEach((t, i) => s += label(141 - (i ? 3 : 0) + i * 32, 15, t, "middle"));
    document.getElementById("meterScale").innerHTML = s;
}

draw();
window.addEventListener("resize", draw);
```
